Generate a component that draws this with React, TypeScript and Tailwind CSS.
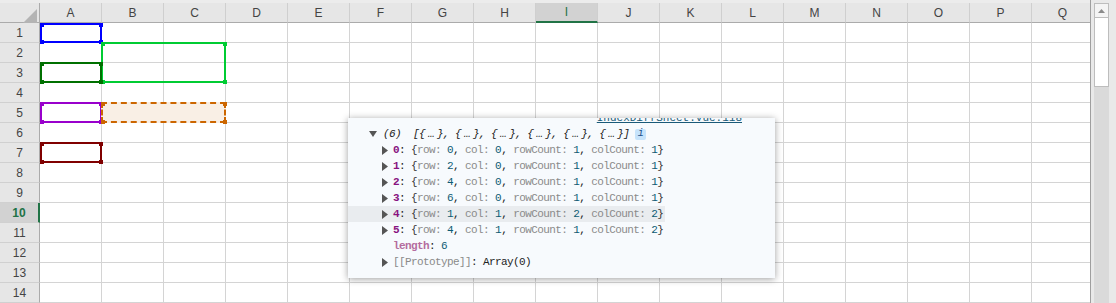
import React from "react";

const cols = ["A", "B", "C", "D", "E", "F", "G", "H", "I", "J", "K", "L", "M", "N", "O", "P", "Q"];
const rows = Array.from({ length: 14 }, (_, i) => i + 1);

const items = [
  [0, 0, 1, 1],
  [2, 0, 1, 1],
  [4, 0, 1, 1],
  [6, 0, 1, 1],
  [1, 1, 2, 2],
  [4, 1, 1, 2],
];

function Corner() {
  return (
    <svg width="40" height="20" viewBox="0 0 40 20" className="block">
      <polygon points="37,6 37,20 23,20" fill="#b4b4b4" />
    </svg>
  );
}

type BoxProps = { x: number; y: number; w: number; h: number; color: string; dashed?: boolean; fill?: string };

function Box({ x, y, w, h, color, dashed, fill }: BoxProps) {
  const handle = "absolute w-[4px] h-[4px]";
  return (
    <div
      className={`absolute border-2 ${dashed ? "border-dashed" : "border-solid"}`}
      style={{ left: x, top: y, width: w, height: h, borderColor: color, background: fill ?? "transparent" }}
    >
      <div className={`${handle} -left-[2px] -top-[2px]`} style={{ background: color }} />
      <div className={`${handle} -right-[3px] -top-[2px]`} style={{ background: color }} />
      <div className={`${handle} -left-[2px] -bottom-[3px]`} style={{ background: color }} />
      <div className={`${handle} -right-[3px] -bottom-[3px]`} style={{ background: color }} />
    </div>
  );
}

function TriDown() {
  return (
    <svg width="8" height="7" viewBox="0 0 8 7" className="block shrink-0">
      <polygon points="0,0 8,0 4,6" fill="#555" />
    </svg>
  );
}

function TriRight() {
  return (
    <svg width="7" height="9" viewBox="0 0 7 9" className="block shrink-0">
      <polygon points="0,0 6,4.5 0,9" fill="#555" />
    </svg>
  );
}

const Ell = () => <span className="inline-block w-[12px] text-center">…</span>;

function Console() {
  return (
    <div className="absolute left-[348px] top-[118px] w-[427px] h-[160px] overflow-hidden bg-[#f7fafd] shadow-[0_1px_7px_rgba(0,0,0,0.38)] font-['Liberation_Mono',monospace] text-[11px] tracking-[-0.6px] text-[#222]">
      {/* location link of the previous log line, mostly scrolled out of view */}
      <div className="-mt-[8px] h-[16px] flex items-center justify-end pr-[33px] leading-[16px]">
        <span className="text-[#1a5a78] underline tracking-[0px]">IndexDiffSheet.vue:118</span>
      </div>
      <div className="inline-flex flex-col whitespace-pre leading-[16px]">
        <div className="flex h-[16px] items-center pl-[21px]">
          <TriDown />
          <span className="ml-[6px] italic">(6)  [{"{"}<Ell />{"}"}, {"{"}<Ell />{"}"}, {"{"}<Ell />{"}"}, {"{"}<Ell />{"}"}, {"{"}<Ell />{"}"}, {"{"}<Ell />{"}"}]</span>
          <span className="ml-[6px] w-[11px] h-[11px] rounded-[2px] bg-[#c6e3fb] flex items-center justify-center text-[10px] italic text-[#1b4f8a] tracking-[0px]">i</span>
        </div>
        {items.map((it, i) => (
          <div key={i} className={`flex h-[16px] items-center pl-[34px] pr-[2px] ${i === 4 ? "bg-[#e9ecef]" : ""}`}>
            <TriRight />
            <span className="ml-[4px] font-bold text-[#881280]">{i}</span>
            <span>: </span>
            <span className="text-[#333]">{"{"}</span>
            <span className="text-[#8a8a8a]">row: </span>
            <span className="text-[#0d5b73]">{it[0]}</span>
            <span>, </span>
            <span className="text-[#8a8a8a]">col: </span>
            <span className="text-[#0d5b73]">{it[1]}</span>
            <span>, </span>
            <span className="text-[#8a8a8a]">rowCount: </span>
            <span className="text-[#0d5b73]">{it[2]}</span>
            <span>, </span>
            <span className="text-[#8a8a8a]">colCount: </span>
            <span className="text-[#0d5b73]">{it[3]}</span>
            <span className="text-[#333]">{"}"}</span>
          </div>
        ))}
        <div className="flex h-[16px] items-center pl-[45px]">
          <span className="font-bold text-[#b46c9e]">length</span>
          <span>: </span>
          <span className="text-[#0d5b73]">6</span>
        </div>
        <div className="flex h-[16px] items-center pl-[34px]">
          <TriRight />
          <span className="ml-[4px] text-[#8a8a8a]">[[Prototype]]</span>
          <span>: Array(0)</span>
        </div>
      </div>
    </div>
  );
}

export default function App() {
  return (
    <div className="relative flex w-[1116px] h-[303px] overflow-hidden bg-[#ececec] font-['Liberation_Sans',Arial,sans-serif]">
      <div className="w-[1090px] pt-[3px] overflow-hidden">
        <div className="grid grid-cols-[40px_repeat(17,62px)] w-[1094px]">
          <div className="h-[20px] bg-[#e6e6e6] border-r border-b border-r-[#ababab] border-b-[#ababab]">
            <Corner />
          </div>
          {cols.map((c) => (
            <div
              key={c}
              className={`h-[20px] flex items-center justify-center text-[12px] border-r border-r-[#cfcfcf] ${
                c === "I"
                  ? "bg-[#d2d2d2] text-[#217346] border-b-2 border-b-[#217346]"
                  : "bg-[#e6e6e6] text-[#444] border-b border-b-[#ababab]"
              }`}
            >
              {c}
            </div>
          ))}
          {rows.map((r) => (
            <React.Fragment key={r}>
              <div
                className={`h-[20px] flex items-center justify-center text-[12px] border-b border-b-[#d0d0d0] ${
                  r === 10
                    ? "bg-[#d2d2d2] text-[#217346] font-bold border-r-2 border-r-[#217346]"
                    : "bg-[#e6e6e6] text-[#444] border-r border-r-[#ababab]"
                }`}
              >
                {r}
              </div>
              {cols.map((c) => (
                <div key={c} className="h-[20px] bg-white border-r border-b border-[#d4d4d4]" />
              ))}
            </React.Fragment>
          ))}
        </div>
      </div>
      <div className="w-[26px] h-full flex border-l border-l-[#9f9f9f] bg-[#e9e9e9] pt-[3px] pl-[3px]">
        <div className="w-[15px] h-full flex flex-col bg-[#dadada]">
          <div className="h-[15px] flex items-center justify-center bg-[#f4f4f4] border border-[#bdbdbd]">
            <svg width="7" height="4" viewBox="0 0 7 4">
              <polygon points="0,4 7,4 3.5,0" fill="#8a8a8a" />
            </svg>
          </div>
          <div className="h-[69px] bg-white border border-t-0 border-[#bdbdbd]" />
        </div>
      </div>

      <Box x={40} y={23} w={62} h={20} color="#0000ff" />
      <Box x={101} y={42} w={125} h={41} color="#00cc33" />
      <Box x={40} y={62} w={62} h={21} color="#007000" />
      <Box x={40} y={102} w={62} h={21} color="#9900cc" />
      <Box x={101} y={102} w={125} h={21} color="#cc6600" dashed fill="#f9efe5" />
      <Box x={40} y={142} w={62} h={21} color="#800000" />

      <Console />
    </div>
  );
}
